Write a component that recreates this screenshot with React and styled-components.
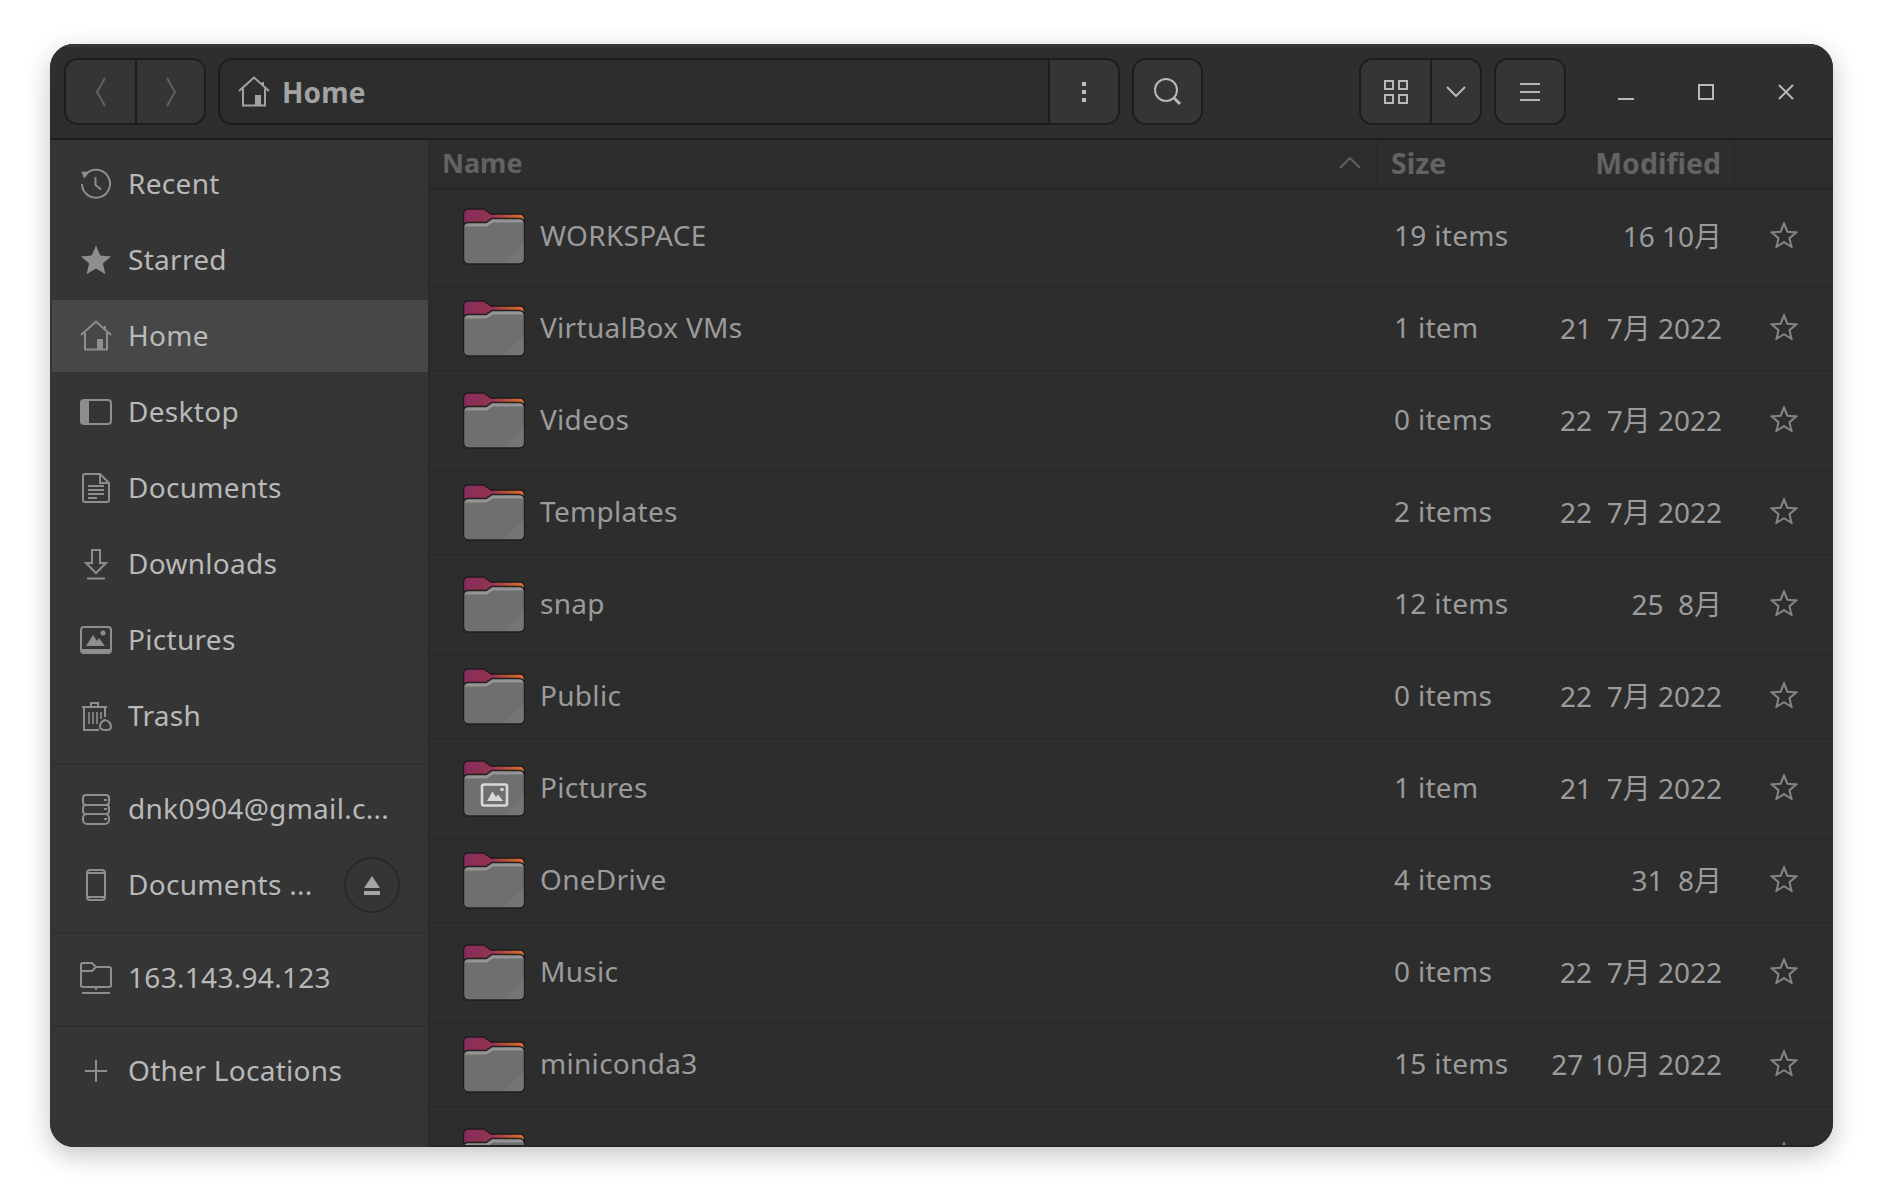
import React from 'react'
import styled, { createGlobalStyle } from 'styled-components'

const FONT = `"Noto Sans", "Noto Sans CJK SC", sans-serif`

const places = [
  { label: 'Recent', icon: 'recent' },
  { label: 'Starred', icon: 'starred' },
  { label: 'Home', icon: 'home', active: true },
  { label: 'Desktop', icon: 'desktop' },
  { label: 'Documents', icon: 'documents' },
  { label: 'Downloads', icon: 'downloads' },
  { label: 'Pictures', icon: 'pictures' },
  { label: 'Trash', icon: 'trash' },
]

// the last row is cut by the window edge, only its folder and star show
const files = [
  { name: 'WORKSPACE', size: '19 items', date: '16 10月' },
  { name: 'VirtualBox VMs', size: '1 item', date: '21  7月 2022' },
  { name: 'Videos', size: '0 items', date: '22  7月 2022' },
  { name: 'Templates', size: '2 items', date: '22  7月 2022' },
  { name: 'snap', size: '12 items', date: '25  8月' },
  { name: 'Public', size: '0 items', date: '22  7月 2022' },
  { name: 'Pictures', size: '1 item', date: '21  7月 2022', pictures: true },
  { name: 'OneDrive', size: '4 items', date: '31  8月' },
  { name: 'Music', size: '0 items', date: '22  7月 2022' },
  { name: 'miniconda3', size: '15 items', date: '27 10月 2022' },
  {},
]

const icons = {
  recent: (
    <>
      <path d="M5.5 6.5A14 14 0 1 1 2 16" fill="none" stroke="currentColor" strokeWidth="2" />
      <path d="M1.5 3.5 9.5 4 4 10.5Z" fill="currentColor" />
      <path d="M15.5 9v8l5.5 4.5" fill="none" stroke="currentColor" strokeWidth="2" />
    </>
  ),
  starred: <path d="M16 1.5 20.3 11.6 31 12.5 22.9 19.6 25.4 30.2 16 24.6 6.6 30.2 9.1 19.6 1 12.5 11.7 11.6Z" fill="currentColor" />,
  home: (
    <>
      <path d="M1 15 16 1.5 31 15M25 6V10" fill="none" stroke="currentColor" strokeWidth="2" />
      <path d="M5 12.5V29.5H27V12.5M9 29.5" fill="none" stroke="currentColor" strokeWidth="2" />
      <path d="M17 19h6v10h-6z" fill="currentColor" />
    </>
  ),
  desktop: (
    <>
      <rect x="1" y="4" width="30" height="24" rx="3" fill="none" stroke="currentColor" strokeWidth="2" />
      <path d="M3 4h6v24H3a2 2 0 0 1-2-2V6a2 2 0 0 1 2-2Z" fill="currentColor" />
    </>
  ),
  documents: (
    <>
      <path d="M5 2H20L29 11V28a2 2 0 0 1-2 2H5a2 2 0 0 1-2-2V4a2 2 0 0 1 2-2Z" fill="none" stroke="currentColor" strokeWidth="2" />
      <path d="M20 2v9h9M8 14h16M8 18h16M8 22h16M8 26h9" fill="none" stroke="currentColor" strokeWidth="2" />
    </>
  ),
  downloads: <path d="M12 2h8v13h6L16 25 6 15h6ZM7 30.5h18" fill="none" stroke="currentColor" strokeWidth="2" />,
  pictures: (
    <>
      <rect x="1" y="3" width="30" height="26" rx="3" fill="none" stroke="currentColor" strokeWidth="2" />
      <path d="M1 25h30v2a2 2 0 0 1-2 2H3a2 2 0 0 1-2-2Z" fill="currentColor" />
      <path d="M6 22 13 11l4 6 2-3 6 8Z" fill="currentColor" />
      <circle cx="23" cy="9" r="2.5" fill="currentColor" />
    </>
  ),
  trash: (
    <>
      <path d="M2 7h25M11 7V3h7v4M4 7v23h15M25 7v10" fill="none" stroke="currentColor" strokeWidth="2" />
      <path d="M9 12v12M13 12v12M17 12v12M21 12v7" fill="none" stroke="currentColor" strokeWidth="1.6" />
      <path d="M25 20c4 1 6 4 6 7 0 2-2 3-5 3s-6-1-6-3c0-3 2-6 5-7Z" fill="none" stroke="currentColor" strokeWidth="2" />
    </>
  ),
  server: (
    <>
      <path d="M6 12a3 3 0 0 1-3-3V5a3 3 0 0 1 3-3h20a3 3 0 0 1 3 3v4a3 3 0 0 1-3 3" fill="none" stroke="currentColor" strokeWidth="2" />
      <path d="M6 21a3 3 0 0 1-3-3v-3a3 3 0 0 1 3-3h20a3 3 0 0 1 3 3v3a3 3 0 0 1-3 3" fill="none" stroke="currentColor" strokeWidth="2" />
      <rect x="3" y="21" width="26" height="10" rx="4" fill="none" stroke="currentColor" strokeWidth="2" />
      <path d="M24 7h3M24 16h3M24 26h3" stroke="currentColor" strokeWidth="2" />
    </>
  ),
  phone: (
    <>
      <rect x="7" y="1" width="18" height="30" rx="3" fill="none" stroke="currentColor" strokeWidth="2" />
      <path d="M7 4h18M7 28h18" stroke="currentColor" strokeWidth="2" />
    </>
  ),
  network: (
    <path d="M3 25a2 2 0 0 1-2-2V3a2 2 0 0 1 2-2h9l4 4h13a2 2 0 0 1 2 2v16a2 2 0 0 1-2 2ZM1 9h11l4-4M16 25v3M2 31h28" fill="none" stroke="currentColor" strokeWidth="2" />
  ),
  plus: <path d="M16 5v22M5 16h22" fill="none" stroke="currentColor" strokeWidth="2" />,
}

function Icon({ name }) {
  return (
    <PlaceGlyph viewBox="0 0 32 32">{icons[name]}</PlaceGlyph>
  )
}

function Folder({ pictures }) {
  return (
    <FolderGlyph viewBox="0 0 62 58">
      <defs>
        <linearGradient id="folderBack" x1="0" x2="1" y1="0" y2="0">
          <stop offset="0" stopColor="#862c5c" />
          <stop offset="0.45" stopColor="#95344f" />
          <stop offset="0.75" stopColor="#bd5538" />
          <stop offset="1" stopColor="#e0702f" />
        </linearGradient>
      </defs>
      <path d="M5 1H21L28 6H57a4.500 4.500 0 0 1 4.500 4.500V25H.5V5.500A4.500 4.500 0 0 1 5 1Z" fill="url(#folderBack)" stroke="#1f1b1d" strokeWidth="1.500" />
      <path d="M5 14.500H23L29 10.500H56.500A5 5 0 0 1 61.500 15.500V51A5 5 0 0 1 56.500 56H5A5 5 0 0 1 .5 51V18A4 4 0 0 1 5 14.500Z" fill="#6f6f6f" stroke="#1f1f1f" strokeWidth="1.500" />
      <path d="M5 15.500H23.500L29.500 11.500H56.500A4 4 0 0 1 60.500 14.500H30L24 18.500H1.500A4 4 0 0 1 5 15.500Z" fill="#949494" />
      <path d="M60.500 36V51A4 4 0 0 1 56.500 55H41Z" fill="#757575" />
      {pictures && (
        <>
          <rect x="19" y="24.500" width="25" height="21" rx="2" fill="none" stroke="#d9d9d9" strokeWidth="2.600" />
          <path d="M24 41 29.500 31.500 33 37 35 34.500 40 41Z" fill="#d9d9d9" />
          <circle cx="39" cy="29.500" r="1.800" fill="#d9d9d9" />
        </>
      )}
    </FolderGlyph>
  )
}

function App() {
  return (
    <Page>
      <GlobalStyle />
      <Window>
        <Toolbar>
          <Segmented>
            <ToolSegment $width={69}>
              <ToolSvg $w={12} $h={30} viewBox="0 0 12 30" $dim><path d="M10 1 2 15l8 14" /></ToolSvg>
            </ToolSegment>
            <ToolSegment $width={69}>
              <ToolSvg $w={12} $h={30} viewBox="0 0 12 30" $dim><path d="M2 1l8 14-8 14" /></ToolSvg>
            </ToolSegment>
          </Segmented>
          <PathBar>
            <PathLabel>
              <HomeGlyph viewBox="0 0 32 32">{icons.home}</HomeGlyph>
              <PathText>Home</PathText>
            </PathLabel>
            <ToolSegment $width={68}>
              <ToolSvg $w={4} $h={20} viewBox="0 0 4 20"><path d="M0 0h4v4H0zM0 8h4v4H0zM0 16h4v4H0z" fill="#bdbdbd" stroke="none" /></ToolSvg>
            </ToolSegment>
          </PathBar>
          <SearchButton>
            <ToolSegment $width={67}>
              <ToolSvg $w={28} $h={28} viewBox="0 0 28 28"><circle cx="12" cy="12" r="11" /><path d="M20 20l6 6" strokeWidth="3" /></ToolSvg>
            </ToolSegment>
          </SearchButton>
          <ViewGroup>
            <ToolSegment $width={69}>
              <ToolSvg $w={24} $h={24} viewBox="0 0 24 24"><path d="M1 1h8v8H1zM15 1h8v8h-8zM1 15h8v8H1zM15 15h8v8h-8z" /></ToolSvg>
            </ToolSegment>
            <ToolSegment $width={50}>
              <ToolSvg $w={20} $h={11} viewBox="0 0 20 11"><path d="M1 1l9 9 9-9" /></ToolSvg>
            </ToolSegment>
          </ViewGroup>
          <MenuButton>
            <ToolSegment $width={68}>
              <ToolSvg $w={20} $h={18} viewBox="0 0 20 18"><path d="M0 1h20M0 9h20M0 17h20" /></ToolSvg>
            </ToolSegment>
          </MenuButton>
          <WindowControls>
            <WindowControl>
              <ToolSvg $w={16} $h={16} viewBox="0 0 16 16"><path d="M0 15h16" /></ToolSvg>
            </WindowControl>
            <WindowControl>
              <ToolSvg $w={16} $h={16} viewBox="0 0 16 16"><path d="M1 1h14v14H1z" /></ToolSvg>
            </WindowControl>
            <WindowControl>
              <ToolSvg $w={16} $h={16} viewBox="0 0 16 16"><path d="M1 1l14 14M15 1 1 15" /></ToolSvg>
            </WindowControl>
          </WindowControls>
        </Toolbar>

        <Content>
          <Sidebar>
            <SideSection>
              {places.map((p) => (
                <Place key={p.label} $active={p.active}>
                  <Icon name={p.icon} />
                  <PlaceName>{p.label}</PlaceName>
                </Place>
              ))}
            </SideSection>
            <SideSection>
              <Place>
                <Icon name="server" />
                <PlaceName>dnk0904@gmail.c...</PlaceName>
              </Place>
              <Place>
                <Icon name="phone" />
                <PlaceName>Documents ...</PlaceName>
                <EjectButton>
                  <svg width="16" height="19" viewBox="0 0 16 19"><path d="M8 0l8 12H0zM0 15h16v4H0z" fill="#a6a6a6" /></svg>
                </EjectButton>
              </Place>
            </SideSection>
            <SideSection>
              <Place>
                <Icon name="network" />
                <PlaceName>163.143.94.123</PlaceName>
              </Place>
            </SideSection>
            <SideSection $last>
              <Place>
                <Icon name="plus" />
                <PlaceName>Other Locations</PlaceName>
              </Place>
            </SideSection>
          </Sidebar>

          <Main>
            <ListHeader>
              <NameHead>
                Name
                <SortGlyph viewBox="0 0 22 12"><path d="M1 11 11 1l10 10" /></SortGlyph>
              </NameHead>
              <SizeHead>Size</SizeHead>
              <DateHead>Modified</DateHead>
              <div />
            </ListHeader>
            <Rows>
              {files.map((f, i) => (
                <Row key={i}>
                  <NameCell>
                    <Folder pictures={f.pictures} />
                    <FileName>{f.name}</FileName>
                  </NameCell>
                  <SizeCell>{f.size}</SizeCell>
                  <DateCell>{f.date}</DateCell>
                  <StarCell>
                    <svg width="28" height="27" viewBox="0 0 28 27">
                      <path d="M14 2.500 17.400 10.700 26.200 11.400 19.500 17.200 21.500 25.800 14 21.200 6.500 25.800 8.500 17.200 1.800 11.400 10.600 10.700Z" fill="none" stroke="#858585" strokeWidth="2" />
                    </svg>
                  </StarCell>
                </Row>
              ))}
            </Rows>
          </Main>
        </Content>
      </Window>
    </Page>
  )
}

const GlobalStyle = createGlobalStyle`
  html, body { margin: 0; background: #fff; }
  * { box-sizing: border-box; }
`

const Page = styled.div`
  width: 1884px;
  height: 1204px;
  padding: 44px 0 0 50px;
  overflow: hidden;
  font-family: ${FONT};
`

const Window = styled.div`
  width: 1783px;
  height: 1103px;
  display: flex;
  flex-direction: column;
  border-radius: 24px;
  overflow: hidden;
  background: #2d2d2d;
  box-shadow: 0 8px 26px rgba(0, 0, 0, 0.24);
`

const Toolbar = styled.div`
  flex: 0 0 96px;
  display: flex;
  align-items: center;
  padding: 0 7px 2px 14px;
  background: #2e2e2e;
  border-top: 3px solid #383838;
  border-bottom: 2px solid #1f1f1f;
`

const Segmented = styled.div`
  display: flex;
  height: 67px;
  border: 2px solid #1d1d1d;
  border-radius: 14px;
  overflow: hidden;
  background: #353535;
`

const ToolSegment = styled.div`
  flex: 0 0 ${(p) => p.$width}px;
  display: flex;
  align-items: center;
  justify-content: center;
  background: #353535;
  & + & { border-left: 2px solid #1d1d1d; }
`

const PathBar = styled(Segmented)`
  width: 903px;
  margin-left: 12px;
  background: #2d2d2d;
`

const PathLabel = styled.div`
  flex: 1;
  display: flex;
  align-items: center;
  padding-left: 18px;
  border-right: 2px solid #1d1d1d;
`

const PathText = styled.span`
  margin-left: 12px;
  font-size: 28px;
  font-weight: 700;
  letter-spacing: 0.2px;
  color: #a3a3a3;
`

const SearchButton = styled(Segmented)`
  width: 71px;
  margin-left: 12px;
`

const ViewGroup = styled(Segmented)`
  margin-left: 156px;
`

const MenuButton = styled(Segmented)`
  width: 72px;
  margin-left: 12px;
`

const WindowControls = styled.div`
  display: flex;
  margin-left: 20px;
`

const WindowControl = styled.div`
  width: 80px;
  display: flex;
  align-items: center;
  justify-content: center;
`

const ToolSvg = styled.svg.attrs({ fill: 'none' })`
  width: ${(p) => p.$w}px;
  height: ${(p) => p.$h}px;
  stroke: ${(p) => (p.$dim ? '#606060' : '#b8b8b8')};
  stroke-width: 2;
`

const HomeGlyph = styled.svg`
  width: 32px;
  height: 32px;
  color: #a3a3a3;
`

const Content = styled.div`
  flex: 1;
  min-height: 0;
  display: flex;
`

const Sidebar = styled.nav`
  flex: 0 0 380px;
  padding-left: 2px;
  background: #353535;
  border-right: 2px solid #2a2a2a;
`

const SideSection = styled.div`
  display: flex;
  flex-direction: column;
  gap: 4px;
  padding: 8px 0 11px;
  border-bottom: ${(p) => (p.$last ? 'none' : '2px solid #2f2f2f')};
`

const Place = styled.div`
  height: 72px;
  display: flex;
  align-items: center;
  padding-left: 28px;
  background: ${(p) => (p.$active ? '#474747' : 'transparent')};
`

const PlaceGlyph = styled.svg`
  flex: 0 0 32px;
  width: 32px;
  height: 32px;
  color: #8e8e8e;
`

const PlaceName = styled.span`
  margin-left: 16px;
  padding-bottom: 2px;
  font-size: 28px;
  letter-spacing: 0.3px;
  color: #b9b9b9;
  white-space: nowrap;
`

const EjectButton = styled.div`
  flex: 0 0 56px;
  height: 56px;
  margin-left: auto;
  margin-right: 28px;
  display: flex;
  align-items: center;
  justify-content: center;
  border: 2px solid #292929;
  border-radius: 50%;
`

const Main = styled.main`
  flex: 1;
  min-width: 0;
  display: flex;
  flex-direction: column;
  background: #2d2d2d;
`

const columns = '948px 159px 198px 1fr'

const ListHeader = styled.div`
  flex: 0 0 50px;
  display: grid;
  grid-template-columns: ${columns};
  border-bottom: 2px solid #272727;
  font-weight: 700;
  color: #636363;
`

const HeadCell = styled.div`
  display: flex;
  align-items: center;
  padding-bottom: 3px;
  font-size: 28.5px;
  border-right: 2px solid #292929;
`

const NameHead = styled(HeadCell)`
  justify-content: space-between;
  padding-left: 12px;
  padding-right: 15px;
  font-size: 27px;
`

const SizeHead = styled(HeadCell)`
  padding-left: 13px;
`

const DateHead = styled(HeadCell)`
  justify-content: flex-end;
  padding-right: 12px;
`

const SortGlyph = styled.svg.attrs({ fill: 'none' })`
  width: 22px;
  height: 12px;
  stroke: #606060;
  stroke-width: 2;
`

const Rows = styled.div`
  flex: 1;
  min-height: 0;
  overflow: hidden;
  border-bottom: 2px solid #262626;
`

const Row = styled.div`
  height: 92px;
  display: grid;
  grid-template-columns: ${columns};
  align-items: center;
  border-bottom: 2px solid #313131;
  font-size: 28px;
  letter-spacing: 0.3px;
  color: #9b9b9b;
`

const NameCell = styled.div`
  display: flex;
  align-items: center;
  padding-left: 33px;
`

const FolderGlyph = styled.svg`
  flex: 0 0 62px;
  width: 62px;
  height: 58px;
  margin-top: 4px;
`

const FileName = styled.span`
  margin-left: 15px;
`

const SizeCell = styled.div`
  padding-left: 16px;
`

const DateCell = styled.div`
  padding-right: 13px;
  letter-spacing: 0;
  text-align: right;
  white-space: pre;
`

const StarCell = styled.div`
  display: flex;
  justify-content: center;
  margin-top: -2px;
`

export default App
